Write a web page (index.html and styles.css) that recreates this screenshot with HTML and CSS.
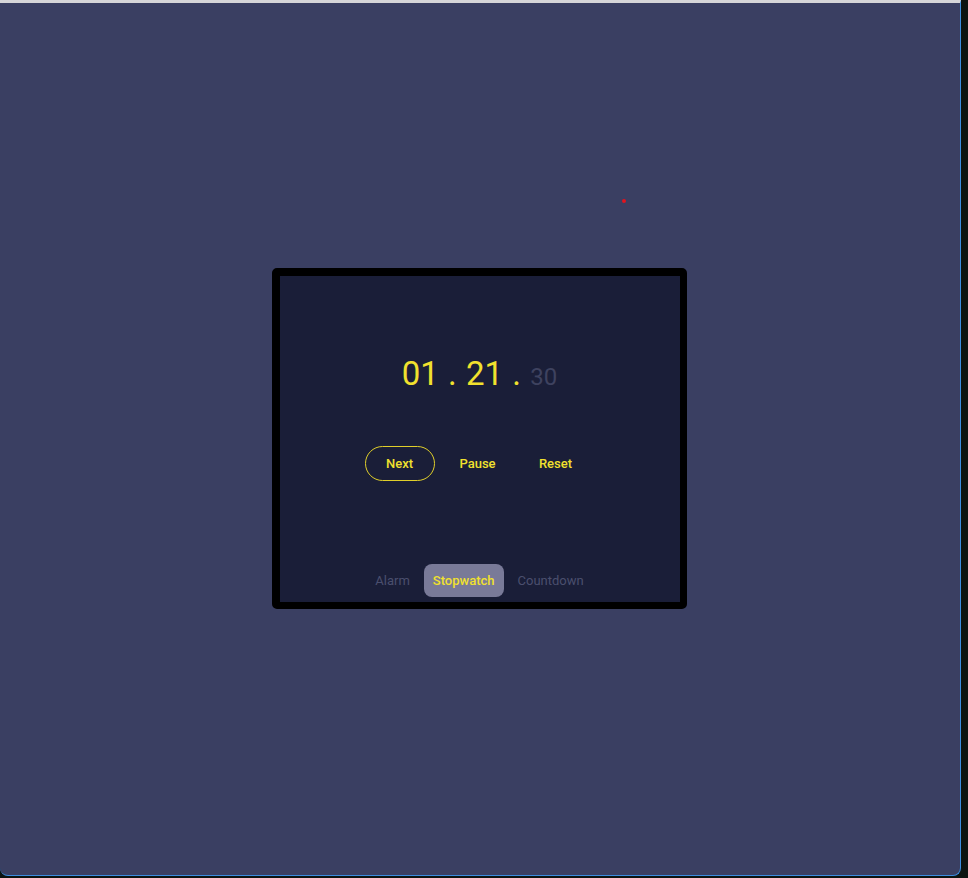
FILE: index.html
```html
<!DOCTYPE html>
<html lang="en">
<head>
<meta charset="utf-8">
<title>Stopwatch</title>
<link rel="stylesheet" href="styles.css">
</head>
<body>
<div class="window">
  <span class="dot"></span>
  <div class="card">
    <div class="time"><span class="big">01 . 21 . </span><span class="small">30</span></div>
    <div class="controls">
      <button class="btn btn-outline">Next</button>
      <button class="btn">Pause</button>
      <button class="btn">Reset</button>
    </div>
    <div class="tabs">
      <span class="tab">Alarm</span>
      <span class="tab tab-active">Stopwatch</span>
      <span class="tab">Countdown</span>
    </div>
  </div>
</div>
</body>
</html>
```

FILE: styles.css
```css
html, body {
  margin: 0;
  padding: 0;
}
body {
  background: #0c1411;
  width: 968px;
  height: 878px;
  overflow: hidden;
  font-family: Roboto, "Liberation Sans", sans-serif;
}
.window {
  position: relative;
  box-sizing: border-box;
  width: 961px;
  height: 876px;
  background: #3a3f62;
  border-top: 3px solid #d6d6d8;
  border-right: 1px solid #3b8de0;
  border-bottom: 1px solid #3b8de0;
  border-radius: 0 0 8px 8px;
  display: flex;
  align-items: center;
  justify-content: center;
}
.dot {
  position: absolute;
  left: 622px;
  top: 196px;
  width: 4px;
  height: 4px;
  border-radius: 50%;
  background: #e0141e;
}
.card {
  box-sizing: content-box;
  width: 400px;
  height: 326px;
  border-style: solid;
  border-color: #000;
  border-width: 8px 7px 7px 8px;
  border-radius: 5px;
  background: #1a1e38;
  display: flex;
  flex-direction: column;
  align-items: center;
  margin-left: -2px;
  margin-top: -2px;
}
.time {
  margin-top: 79px;
  height: 38px;
  line-height: 38px;
  white-space: pre;
  word-spacing: 1px;
}
.time .big {
  font-size: 33px;
  color: #f1e12e;
}
.time .small {
  font-size: 24px;
  color: #3e425f;
}
.controls {
  margin-top: 53px;
  display: flex;
  gap: 8px;
  margin-left: -4px;
}
.btn {
  font-family: Roboto, "Liberation Sans", sans-serif;
  font-size: 13px;
  font-weight: 500;
  color: #f1e12e;
  background: transparent;
  border: 1px solid transparent;
  border-radius: 18px;
  height: 35px;
  width: 70px;
  padding: 0;
  cursor: pointer;
}
.btn-outline {
  border-color: #e0cf2a;
}
.tabs {
  margin-top: auto;
  margin-bottom: 5px;
  display: flex;
  gap: 5px;
}
.tab {
  height: 33px;
  line-height: 33px;
  padding: 0 9px;
  font-size: 13px;
  color: #4b4f6e;
  border-radius: 8px;
}
.tab-active {
  background: #797a98;
  color: #f1e12e;
  font-weight: 500;
}
```
